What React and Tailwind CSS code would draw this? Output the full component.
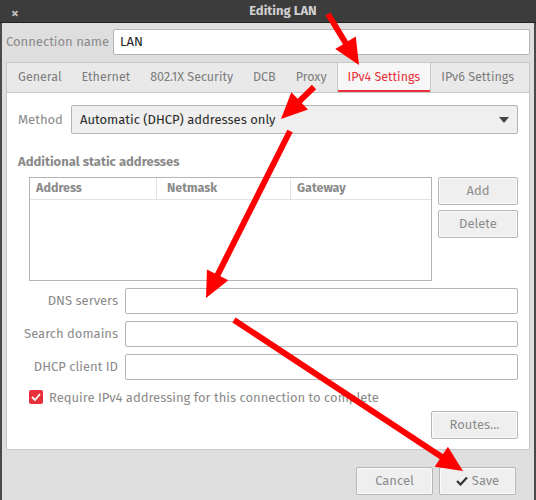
import React from 'react';

const font = { fontFamily: '"Fira Sans", "Noto Sans", "Open Sans", sans-serif' };

// red annotation arrows painted over the dialog
const arrows = [
  { from: [328, 14], to: [359, 65] },
  { from: [314, 87], to: [281, 119] },
  { from: [290, 131], to: [206, 298] },
  { from: [234, 320], to: [463, 471] },
];

const Arrow = ({ from, to }) => {
  const dx = to[0] - from[0];
  const dy = to[1] - from[1];
  const len = Math.hypot(dx, dy);
  const ux = dx / len;
  const uy = dy / len;
  const L = 26;
  const W = 24;
  const bx = to[0] - ux * L;
  const by = to[1] - uy * L;
  const pts = [
    `${to[0]},${to[1]}`,
    `${bx - uy * W / 2},${by + ux * W / 2}`,
    `${bx + uy * W / 2},${by - ux * W / 2}`,
  ].join(' ');
  return (
    <g>
      <line x1={from[0]} y1={from[1]} x2={bx + ux * 2} y2={by + uy * 2} stroke="#ff0000" strokeWidth="6" />
      <polygon points={pts} fill="#ff0000" />
    </g>
  );
};

const Tab = ({ label, active }) => (
  <div
    className={`shrink-0 whitespace-nowrap px-[10px] h-full flex items-center text-[12.5px] ${
      active ? 'bg-[#f7f7f7] text-[#e8303a] border-x border-[#c8c8c8] shadow-[inset_0_-2px_0_#e8303a]' : 'text-[#7c7c7c]'
    }`}
  >
    {label}
  </div>
);

const Field = ({ label }) => (
  <div className="flex items-center h-[26px]">
    <div className="w-[107px] pr-[7px] text-right text-[13px] text-[#8a8a8a] whitespace-nowrap">{label}</div>
    <div className="flex-1 h-full bg-white border border-[#b4b4b4] rounded-[2px]" />
  </div>
);

const Button = ({ children, className = '' }) => (
  <div className={`flex items-center justify-center gap-1 bg-[#efefef] border border-[#b6b6b6] rounded-[2px] text-[13px] text-[#8c8c8c] shadow-[inset_0_0_0_1px_#fafafa] ${className}`}>
    {children}
  </div>
);

export default function App() {
  return (
    <div className="relative w-[536px] h-[500px] overflow-hidden bg-[#dedede]" style={font}>
      {/* title bar */}
      <div className="h-[23px] bg-[#3c3c3c] border-b border-[#222] flex items-center relative">
        <span className="absolute left-[11px] top-[2px] text-[#bdbdbd] text-[15px] font-bold">×</span>
        <div className="flex-1 text-center text-[13px] font-bold text-[#cfcfcf] pl-[30px]">Editing LAN</div>
      </div>

      <div className="h-[477px] border-x-2 border-[#4a4a4a] px-[4px] pt-[6px]">
        {/* connection name */}
        <div className="flex items-center h-[26px]">
          <div className="w-[107px] text-[13px] text-[#8a8a8a] whitespace-nowrap">Connection name</div>
          <div className="flex-1 h-full bg-white border border-[#b4b4b4] rounded-[2px] flex items-center px-[6px] text-[13px] text-[#222]">
            LAN
          </div>
        </div>

        {/* tabs */}
        <div className="mt-[7px] h-[30px] flex items-stretch overflow-hidden bg-[#e9e9e9] border border-b-0 border-[#c8c8c8] px-[1px]">
          <Tab label="General" />
          <Tab label="Ethernet" />
          <Tab label="802.1X Security" />
          <Tab label="DCB" />
          <Tab label="Proxy" />
          <Tab label="IPv4 Settings" active />
          <Tab label="IPv6 Settings" />
        </div>

        {/* panel */}
        <div className="h-[358px] bg-white border border-[#c8c8c8] px-[11px] pt-[12px]">
          <div className="flex items-center h-[29px]">
            <div className="w-[53px] text-[13px] text-[#8a8a8a]">Method</div>
            <div className="flex-1 h-full bg-[#efefef] border border-[#b4b4b4] rounded-[2px] flex items-center justify-between px-[8px] text-[13px] text-[#2a2a2a]">
              <span>Automatic (DHCP) addresses only</span>
              <svg width="10" height="6" viewBox="0 0 10 6"><path d="M0 0h10L5 6z" fill="#444" /></svg>
            </div>
          </div>

          <div className="mt-[18px] text-[13px] font-bold text-[#8a8a8a]">Additional static addresses</div>

          <div className="mt-[5px] ml-[11px] flex gap-[6px]">
            <div className="w-[404px] h-[104px] border border-[#b4b4b4]">
              <div className="h-[22px] flex border-b border-[#e2e2e2] text-[12.5px] font-bold text-[#8a8a8a]">
                <div className="w-[127px] px-[6px] flex items-center border-r border-[#e2e2e2]">Address</div>
                <div className="w-[134px] px-[10px] flex items-center border-r border-[#e2e2e2]">Netmask</div>
                <div className="flex-1 px-[6px] flex items-center">Gateway</div>
              </div>
            </div>
            <div className="flex flex-col gap-[5px]">
              <Button className="w-[80px] h-[28px]">Add</Button>
              <Button className="w-[80px] h-[28px]">Delete</Button>
            </div>
          </div>

          <div className="mt-[7px] flex flex-col gap-[7px]">
            <Field label="DNS servers" />
            <Field label="Search domains" />
            <Field label="DHCP client ID" />
          </div>

          <div className="mt-[8px] ml-[11px] flex items-center gap-[6px]">
            <div className="w-[14px] h-[14px] rounded-[2px] bg-[#e8303a] flex items-center justify-center">
              <svg width="10" height="8" viewBox="0 0 10 8"><path d="M1 4l3 3 5-6" stroke="#fff" strokeWidth="1.8" fill="none" /></svg>
            </div>
            <span className="text-[13px] text-[#8a8a8a]">Require IPv4 addressing for this connection to complete</span>
          </div>

          <div className="mt-[4px] flex justify-end">
            <Button className="w-[87px] h-[28px]">Routes...</Button>
          </div>
        </div>

        {/* footer */}
        <div className="mt-[17px] flex justify-end gap-[6px] pr-[14px]">
          <Button className="w-[77px] h-[28px]">Cancel</Button>
          <Button className="w-[77px] h-[28px]">
            <svg width="12" height="10" viewBox="0 0 12 10"><path d="M1 5l3.5 3.5L11 1.5" stroke="#333" strokeWidth="2.2" fill="none" /></svg>
            Save
          </Button>
        </div>
      </div>

      {/* annotation overlay */}
      <svg className="absolute inset-0 pointer-events-none" width="536" height="500">
        {arrows.map((a, i) => <Arrow key={i} {...a} />)}
      </svg>
    </div>
  );
}
